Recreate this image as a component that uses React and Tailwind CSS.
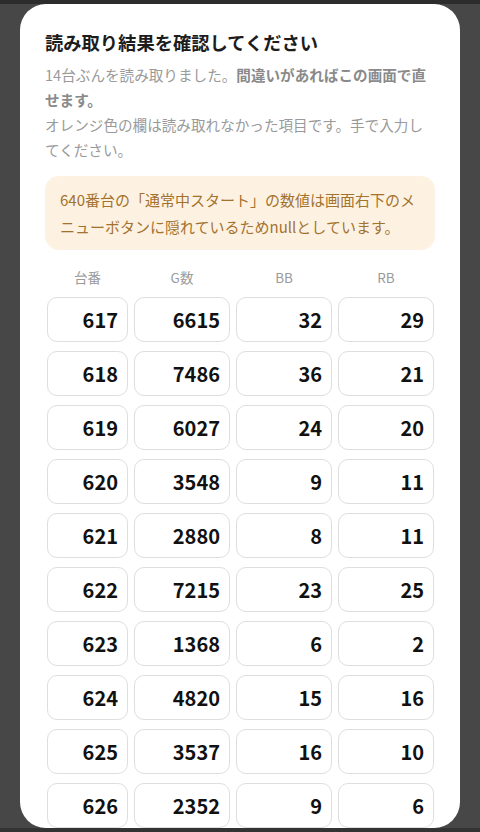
const rows = [
  ['617', '6615', '32', '29'],
  ['618', '7486', '36', '21'],
  ['619', '6027', '24', '20'],
  ['620', '3548', '9', '11'],
  ['621', '2880', '8', '11'],
  ['622', '7215', '23', '25'],
  ['623', '1368', '6', '2'],
  ['624', '4820', '15', '16'],
  ['625', '3537', '16', '10'],
  ['626', '2352', '9', '6'],
];

const headers = ['台番', 'G数', 'BB', 'RB'];

export default function App() {
  return (
    <div
      className="flex h-[832px] flex-col overflow-hidden bg-[#474747]"
      style={{ fontFamily: '"Noto Sans CJK JP", "Noto Sans", sans-serif' }}
    >
      <div className="h-[4px] shrink-0 bg-[#2c2c2c]" />
      <div className="mx-[20px] min-h-0 flex-1 overflow-hidden rounded-[26px] bg-white">
        <div className="px-[25px] pt-[22px]">
          <h1 className="text-[18.3px] font-bold leading-[32px] text-[#1c1c1c]">
            読み取り結果を確認してください
          </h1>
          <p className="mt-[4px] text-[14.6px] leading-[25px] text-[#9a9a9a]">
            14台ぶんを読み取りました。<span className="font-bold text-[#8a8a8a]">間違いがあればこの画面で直せます。</span>
            <br />
            オレンジ色の欄は読み取れなかった項目です。手で入力してください。
          </p>

          <div className="mt-[14px] rounded-[14px] bg-[#fdf2e2] px-[15px] py-[10px] text-[15px] leading-[27px] text-[#a4722f]">
            640番台の「通常中スタート」の数値は画面右下のメニューボタンに隠れているためnullとしています。
          </div>

          <div className="mt-[14px] grid grid-cols-[81px_96px_96px_96px] gap-x-[6px] pl-[2px]">
            {headers.map((h) => (
              <div key={h} className="text-center text-[13.5px] leading-[26px] text-[#9a9a9a]">
                {h}
              </div>
            ))}
          </div>

          <div className="mt-[7px] grid grid-cols-[81px_96px_96px_96px] gap-x-[6px] gap-y-[9px] pl-[2px]">
            {rows.map((row) =>
              row.map((v, i) => (
                <div
                  key={row[0] + '-' + i}
                  className="flex h-[45px] items-center justify-end rounded-[10px] border border-[#dedede] pr-[9px] text-[20px] font-bold text-[#111]"
                >
                  {v}
                </div>
              ))
            )}
          </div>
        </div>
      </div>
      <div className="h-[4px] shrink-0 bg-[#333333]" />
    </div>
  );
}
